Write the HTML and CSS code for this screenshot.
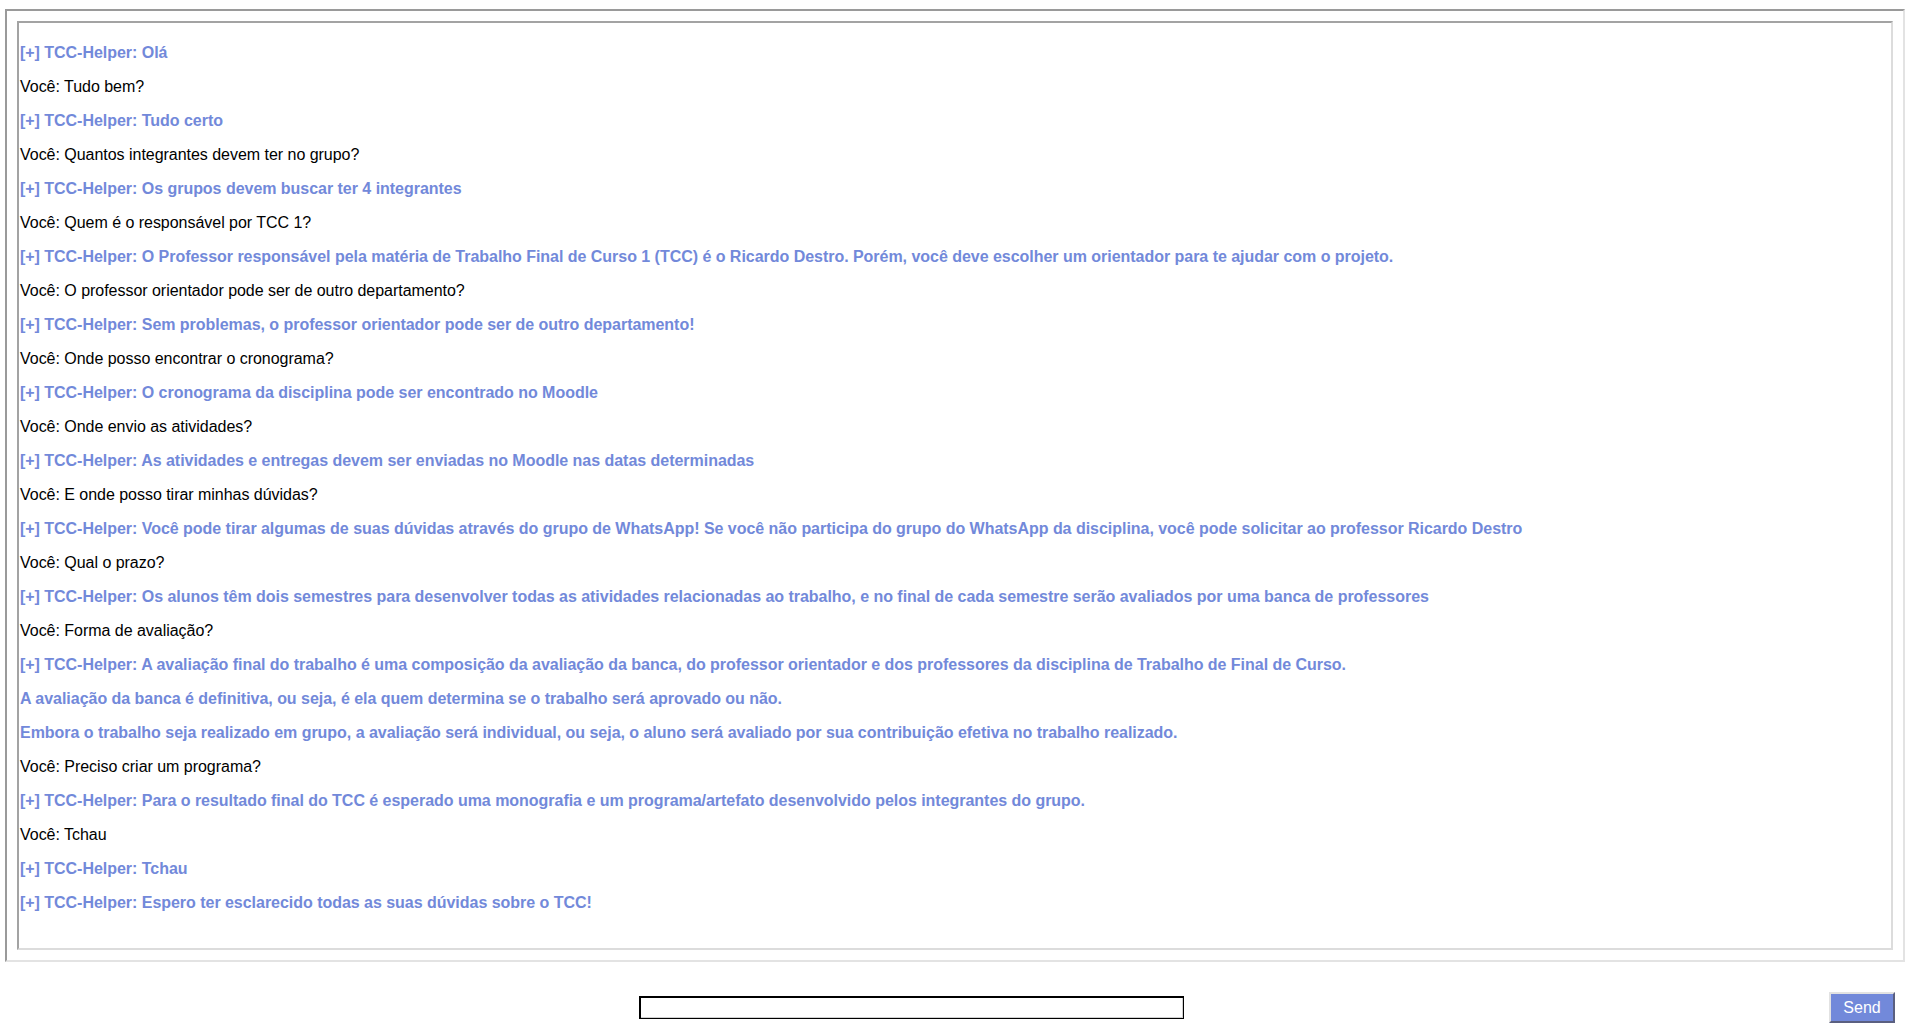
FILE: index.html
```html
<!DOCTYPE html>
<html lang="pt-BR">
<head>
<meta charset="utf-8">
<title>TCC-Helper</title>
<link rel="stylesheet" href="styles.css">
</head>
<body>
<div class="chat-frame">
  <div class="messages">
    <p class="bot">[+] TCC-Helper: Olá</p>
    <p class="user">Você: Tudo bem?</p>
    <p class="bot">[+] TCC-Helper: Tudo certo</p>
    <p class="user">Você: Quantos integrantes devem ter no grupo?</p>
    <p class="bot">[+] TCC-Helper: Os grupos devem buscar ter 4 integrantes</p>
    <p class="user">Você: Quem é o responsável por TCC 1?</p>
    <p class="bot">[+] TCC-Helper: O Professor responsável pela matéria de Trabalho Final de Curso 1 (TCC) é o Ricardo Destro. Porém, você deve escolher um orientador para te ajudar com o projeto.</p>
    <p class="user">Você: O professor orientador pode ser de outro departamento?</p>
    <p class="bot">[+] TCC-Helper: Sem problemas, o professor orientador pode ser de outro departamento!</p>
    <p class="user">Você: Onde posso encontrar o cronograma?</p>
    <p class="bot">[+] TCC-Helper: O cronograma da disciplina pode ser encontrado no Moodle</p>
    <p class="user">Você: Onde envio as atividades?</p>
    <p class="bot">[+] TCC-Helper: As atividades e entregas devem ser enviadas no Moodle nas datas determinadas</p>
    <p class="user">Você: E onde posso tirar minhas dúvidas?</p>
    <p class="bot">[+] TCC-Helper: Você pode tirar algumas de suas dúvidas através do grupo de WhatsApp! Se você não participa do grupo do WhatsApp da disciplina, você pode solicitar ao professor Ricardo Destro</p>
    <p class="user">Você: Qual o prazo?</p>
    <p class="bot">[+] TCC-Helper: Os alunos têm dois semestres para desenvolver todas as atividades relacionadas ao trabalho, e no final de cada semestre serão avaliados por uma banca de professores</p>
    <p class="user">Você: Forma de avaliação?</p>
    <p class="bot">[+] TCC-Helper: A avaliação final do trabalho é uma composição da avaliação da banca, do professor orientador e dos professores da disciplina de Trabalho de Final de Curso.</p>
    <p class="bot">A avaliação da banca é definitiva, ou seja, é ela quem determina se o trabalho será aprovado ou não.</p>
    <p class="bot">Embora o trabalho seja realizado em grupo, a avaliação será individual, ou seja, o aluno será avaliado por sua contribuição efetiva no trabalho realizado.</p>
    <p class="user">Você: Preciso criar um programa?</p>
    <p class="bot">[+] TCC-Helper: Para o resultado final do TCC é esperado uma monografia e um programa/artefato desenvolvido pelos integrantes do grupo.</p>
    <p class="user">Você: Tchau</p>
    <p class="bot">[+] TCC-Helper: Tchau</p>
    <p class="bot">[+] TCC-Helper: Espero ter esclarecido todas as suas dúvidas sobre o TCC!</p>
  </div>
</div>
<form class="composer" onsubmit="return false;">
  <input class="msg-input" type="text" autofocus>
  <button class="send-btn" type="submit">Send</button>
</form>
</body>
</html>
```

FILE: styles.css
```css
html, body {
  margin: 0;
  padding: 0;
  background: #ffffff;
}

body {
  font-family: "Liberation Sans", Arial, sans-serif;
  font-size: 16px;
  width: 1910px;
  height: 1028px;
  overflow: hidden;
}

.chat-frame {
  box-sizing: border-box;
  margin: 9px 5px 0 5px;
  width: 1900px;
  height: 953px;
  padding: 10px;
  border-style: solid;
  border-width: 2px;
  border-color: #9a9a9a #e3e3e3 #e3e3e3 #9a9a9a;
}

.messages {
  box-sizing: border-box;
  height: 929px;
  padding: 5px 0 0 1px;
  overflow: hidden;
  border-style: solid;
  border-width: 2px;
  border-color: #a3a3a3 #dcdcdc #dcdcdc #a3a3a3;
}

.messages p {
  margin: 16px 0;
  line-height: 18px;
  white-space: nowrap;
}

.bot {
  color: #7289da;
  font-weight: bold;
  letter-spacing: -0.03px;
}

.user {
  color: #000000;
  letter-spacing: -0.03px;
}

.composer {
  display: flex;
  align-items: center;
  margin: 0;
  padding: 30px 15px 0 639px;
}

.msg-input {
  box-sizing: border-box;
  width: 545px;
  height: 23px;
  margin: 0;
  padding: 0 2px;
  border: 1px solid #000;
  box-shadow: inset 1px 1px 0 #000, inset -1px -1px 0 #d0d0d0;
  font-family: "Liberation Sans", Arial, sans-serif;
  font-size: 14px;
  outline: none;
  background: #fff;
}

.send-btn {
  box-sizing: border-box;
  margin-left: auto;
  width: 66px;
  height: 31px;
  padding: 0;
  background: #7289da;
  color: #ffffff;
  font-family: "Liberation Sans", Arial, sans-serif;
  font-size: 16px;
  border-style: solid;
  border-width: 2px;
  border-color: #e2e2e2 #5a5f80 #5a5f80 #e2e2e2;
}
```
